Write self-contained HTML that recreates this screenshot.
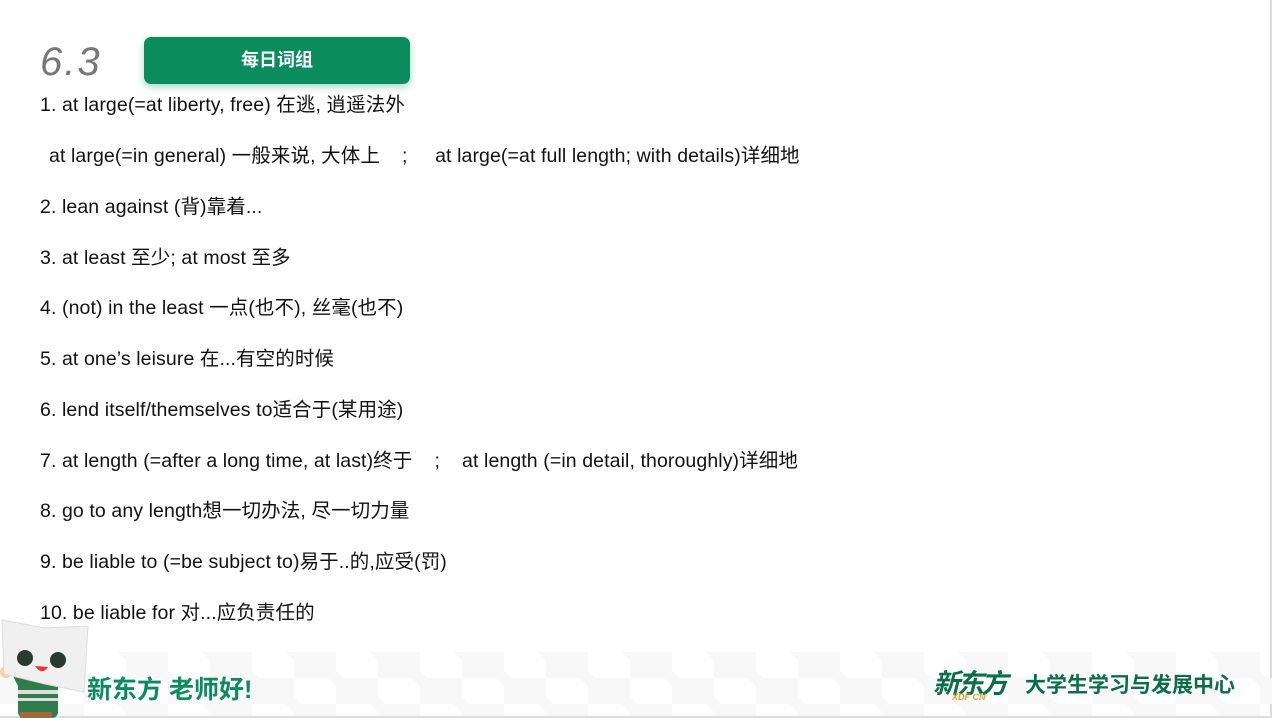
<!DOCTYPE html>
<html><head><meta charset="utf-8"><style>
body{margin:0;width:1272px;height:718px;background:#fff;position:relative;overflow:hidden;font-family:"Liberation Sans","Noto Sans CJK SC",sans-serif;}
.t{position:absolute;left:40px;font-size:19.5px;color:#111;white-space:pre;line-height:22px;letter-spacing:0.1px}
.band{position:absolute;left:0;top:652px;width:1272px;height:64px;
background-image:linear-gradient(45deg,#f8f8f8 25%,transparent 25%,transparent 75%,#f8f8f8 75%),linear-gradient(45deg,#f8f8f8 25%,transparent 25%,transparent 75%,#f8f8f8 75%);
background-size:84px 52px;background-position:0 0,42px 26px;}
</style></head><body>
<div style="position:absolute;left:0;right:0;bottom:0;height:2px;background:#ddd"></div>
<div style="position:absolute;right:0;top:0;bottom:0;width:2px;background:#ddd"></div>
<div class="band"></div>
<div style="position:absolute;left:40px;top:40px;font-size:40px;color:#777;font-style:italic;font-family:'Liberation Sans',sans-serif;letter-spacing:2px">6.3</div>
<div style="position:absolute;left:144px;top:37px;width:266px;height:47px;background:#0b8c5f;border-radius:7px;box-shadow:0 3px 8px rgba(11,140,95,0.35);color:#fff;font-weight:bold;font-size:18px;text-align:center;line-height:47px">每日词组</div>
<div class="t" style="top:94px">1. at large(=at liberty, free) 在逃, 逍遥法外</div>
<div class="t" style="top:145px;left:49px">at large(=in general) 一般来说, 大体上    ;     at large(=at full length; with details)详细地</div>
<div class="t" style="top:196px">2. lean against (背)靠着...</div>
<div class="t" style="top:247px">3. at least 至少; at most 至多</div>
<div class="t" style="top:297px">4. (not) in the least 一点(也不), 丝毫(也不)</div>
<div class="t" style="top:348px">5. at one’s leisure 在...有空的时候</div>
<div class="t" style="top:399px">6. lend itself/themselves to适合于(某用途)</div>
<div class="t" style="top:450px">7. at length (=after a long time, at last)终于    ;    at length (=in detail, thoroughly)详细地</div>
<div class="t" style="top:500px">8. go to any length想一切办法, 尽一切力量</div>
<div class="t" style="top:551px">9. be liable to (=be subject to)易于..的,应受(罚)</div>
<div class="t" style="top:602px">10. be liable for 对...应负责任的</div>
<svg style="position:absolute;left:0;top:612px" width="92" height="106">
<path d="M12 62 L26 90 L34 72 Z" fill="#2f7d4e"/>
<rect x="18" y="62" width="40" height="44" rx="6" fill="#2f7d4e"/>
<rect x="18" y="78" width="40" height="4" fill="#ddd"/>
<rect x="18" y="86" width="40" height="3" fill="#ddd"/>
<rect x="20" y="100" width="32" height="6" fill="#a06a3a"/>
<circle cx="6" cy="60" r="6" fill="#f2cfa8"/>
<path d="M2 8 L45 16 L88 14 L84 80 L45 72 L4 62 Z" fill="#f0f0f0" stroke="#ddd"/>
<circle cx="25" cy="46" r="8" fill="#2a3a30"/><circle cx="58" cy="48" r="8" fill="#2a3a30"/>
<path d="M35 54 Q42 64 48 55 Z" fill="#e33"/>
</svg>
<div style="position:absolute;left:87px;top:670px;font-size:25px;font-weight:bold;color:#0b8c5f">新东方 老师好!</div>
<div style="position:absolute;left:933px;top:662px;font-size:27px;font-weight:bold;font-style:italic;color:#0b6e4a;letter-spacing:-3px">新东方</div>
<div style="position:absolute;left:952px;top:692px;font-size:9px;font-weight:bold;font-style:italic;color:#f0a020">XDF CN</div>
<div style="position:absolute;left:1025px;top:669px;font-size:21px;font-weight:bold;color:#0b6e4a">大学生学习与发展中心</div>
</body></html>
